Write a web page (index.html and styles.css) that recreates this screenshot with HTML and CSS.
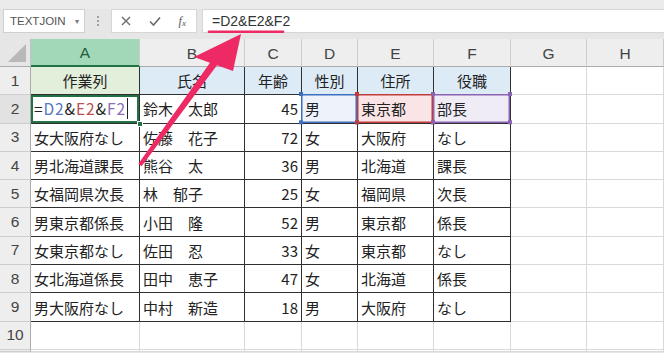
FILE: index.html
```html
<!DOCTYPE html>
<html lang="ja">
<head>
<meta charset="utf-8">
<title>TEXTJOIN</title>
<link rel="stylesheet" href="styles.css">
</head>
<body>
<div class="app">
  <div class="topstrip"></div>
  <div class="fbar">
    <div class="namebox"><span>TEXTJOIN</span><span class="dd">&#9662;</span></div>
    <div class="grip"><i></i><i></i><i></i></div>
    <div class="btns">
      <svg class="ico" width="12" height="12" viewBox="0 0 12 12"><path d="M2 2 L10 10 M10 2 L2 10" stroke="#6b6b6b" stroke-width="1.4" fill="none"/></svg>
      <svg class="ico" width="14" height="12" viewBox="0 0 14 12"><path d="M2 6.5 L5.5 10 L12 2.5" stroke="#6b6b6b" stroke-width="1.6" fill="none"/></svg>
      <span class="fx">f<sub>x</sub></span>
    </div>
    <div class="formula">=D2&amp;E2&amp;F2</div>
  </div>
  <div class="gap"></div>
  <div class="sheet">
    <div class="corner"><span class="tri"></span></div>
    <div class="ch act">A</div><div class="ch">B</div><div class="ch">C</div><div class="ch">D</div><div class="ch">E</div><div class="ch">F</div><div class="ch">G</div><div class="ch">H</div>

    <div class="rh">1</div>
    <div class="t hg">作業列</div><div class="t hb">氏名</div><div class="t hb">年齢</div><div class="t hb">性別</div><div class="t hb">住所</div><div class="t hb">役職</div><div class="c"></div><div class="c"></div>

    <div class="rh act">2</div>
    <div class="t actcell"><span class="ftxt">=<span class="cd">D2</span>&amp;<span class="ce">E2</span>&amp;<span class="cf">F2</span></span><span class="caret"></span><span class="handle"></span></div><div class="t">鈴木　太郎</div><div class="t num">45</div><div class="t ref rd">男</div><div class="t ref re">東京都</div><div class="t ref rf">部長</div><div class="c"></div><div class="c"></div>

    <div class="rh">3</div>
    <div class="t">女大阪府なし</div><div class="t">佐藤　花子</div><div class="t num">72</div><div class="t">女</div><div class="t">大阪府</div><div class="t">なし</div><div class="c"></div><div class="c"></div>

    <div class="rh">4</div>
    <div class="t">男北海道課長</div><div class="t">熊谷　太</div><div class="t num">36</div><div class="t">男</div><div class="t">北海道</div><div class="t">課長</div><div class="c"></div><div class="c"></div>

    <div class="rh">5</div>
    <div class="t">女福岡県次長</div><div class="t">林　郁子</div><div class="t num">25</div><div class="t">女</div><div class="t">福岡県</div><div class="t">次長</div><div class="c"></div><div class="c"></div>

    <div class="rh">6</div>
    <div class="t">男東京都係長</div><div class="t">小田　隆</div><div class="t num">52</div><div class="t">男</div><div class="t">東京都</div><div class="t">係長</div><div class="c"></div><div class="c"></div>

    <div class="rh">7</div>
    <div class="t">女東京都なし</div><div class="t">佐田　忍</div><div class="t num">33</div><div class="t">女</div><div class="t">東京都</div><div class="t">なし</div><div class="c"></div><div class="c"></div>

    <div class="rh">8</div>
    <div class="t">女北海道係長</div><div class="t">田中　恵子</div><div class="t num">47</div><div class="t">女</div><div class="t">北海道</div><div class="t">係長</div><div class="c"></div><div class="c"></div>

    <div class="rh">9</div>
    <div class="t">男大阪府なし</div><div class="t">中村　新造</div><div class="t num">18</div><div class="t">男</div><div class="t">大阪府</div><div class="t">なし</div><div class="c"></div><div class="c"></div>

    <div class="rh">10</div>
    <div class="c"></div><div class="c"></div><div class="c"></div><div class="c"></div><div class="c"></div><div class="c"></div><div class="c"></div><div class="c"></div>

    <div class="rh"></div>
    <div class="c"></div><div class="c"></div><div class="c"></div><div class="c"></div><div class="c"></div><div class="c"></div><div class="c"></div><div class="c"></div>
  </div>
  <svg class="arrow" width="664" height="353" viewBox="0 0 664 353">
    <line x1="209" y1="31.8" x2="283" y2="31.8" stroke="#ee2a64" stroke-width="2.6" stroke-linecap="round"/>
    <polygon points="241,34 233,71 217,65.2 141.6,166.2 138.4,163.8 210,62.7 194,57" fill="#ee2a64"/>
  </svg>
</div>
</body>
</html>
```

FILE: styles.css
```css
* { box-sizing: border-box; }
html, body { margin: 0; padding: 0; }
body {
  width: 664px;
  height: 353px;
  overflow: hidden;
  background: #e6e6e6;
  font-family: "Noto Sans CJK JP", "Noto Sans", sans-serif;
}
.app { position: relative; width: 664px; height: 353px; }
.topstrip { height: 10px; background: #ebebeb; border-bottom: 1px solid #dcdcdc; }
.fbar {
  display: flex;
  align-items: stretch;
  height: 24px;
  margin-top: -1px;
  background: #e6e6e6;
}
.namebox {
  width: 82px;
  margin-left: 3px;
  background: #fff;
  border: 1px solid #cfcfcf;
  display: flex;
  align-items: center;
  justify-content: space-between;
  padding: 0 5px 0 6px;
  font-family: "Liberation Sans", "Open Sans", sans-serif;
  font-size: 11.5px;
  color: #555;
}
.dd { font-size: 8px; color: #777; }
.grip {
  width: 26px;
  display: flex;
  flex-direction: column;
  align-items: center;
  justify-content: center;
  gap: 2px;
}
.grip i { display: block; width: 2px; height: 2px; background: #a0a0a0; }
.btns {
  width: 86px;
  background: #fff;
  border: 1px solid #d6d6d6;
  display: flex;
  align-items: center;
  justify-content: space-around;
  padding: 0 2px 0 0;
}
.fx {
  font-family: "Liberation Serif", serif;
  font-style: italic;
  font-size: 12px;
  color: #555;
}
.fx sub { font-size: 9px; vertical-align: -1px; }
.formula {
  flex: 1;
  margin-left: 5px;
  background: #fff;
  border: 1px solid #d6d6d6;
  border-right: none;
  padding-left: 9px;
  display: flex;
  align-items: center;
  font-family: "Liberation Sans", "Open Sans", sans-serif;
  font-size: 14px;
  color: #333;
}
.gap { height: 6px; background: #e6e6e6; }
.sheet {
  display: grid;
  grid-template-columns: 31px 109px 105px 57px 56px 76px 77px 76px 77px;
  grid-template-rows: 28px repeat(10, 28.3px) 1fr;
  height: 313px;
  background: #fff;
  font-size: 15px;
  color: #222;
}
.corner {
  position: relative;
  background: #e6e6e6;
  border-right: 1px solid #c2c2c2;
  border-bottom: 1px solid #ababab;
}
.tri {
  position: absolute;
  right: 4px;
  bottom: 4px;
  width: 0;
  height: 0;
  border-left: 18px solid transparent;
  border-bottom: 18px solid #b8b8b8;
}
.ch {
  background: #eeeeee;
  border-right: 1px solid #cdcdcd;
  border-bottom: 1px solid #ababab;
  display: flex;
  align-items: center;
  justify-content: center;
  font-family: "Liberation Sans", "Open Sans", sans-serif;
  font-size: 15.5px;
  color: #444;
  padding-top: 2px;
}
.ch.act {
  background: #a2d8b8;
  border-bottom: 2px solid #217346;
  color: #1f5f3a;
}
.rh {
  background: #eeeeee;
  border-right: 1px solid #ababab;
  border-bottom: 1px solid #cdcdcd;
  display: flex;
  align-items: center;
  justify-content: center;
  font-family: "Liberation Sans", "Open Sans", sans-serif;
  font-size: 15.5px;
  color: #444;
}
.rh.act { background: #e2e2e2; }
.c {
  border-right: 1px solid #d9d9d9;
  border-bottom: 1px solid #d9d9d9;
}
.t {
  position: relative;
  border-right: 1px solid #303030;
  border-bottom: 1px solid #303030;
  display: flex;
  align-items: center;
  padding: 0 3px;
  white-space: nowrap;
  line-height: 1;
}
.hg { background: #e2efda; justify-content: center; }
.hb { background: #ddebf7; justify-content: center; }
.num { justify-content: flex-end; }
.actcell {
  box-shadow: inset 0 0 0 2px #217346;
}
.ftxt { font-size: 15.5px; letter-spacing: 0.9px; }
.cd { color: #5479c2; }
.ce { color: #c0504d; }
.cf { color: #8d6bb5; }
.caret {
  display: inline-block;
  width: 1px;
  height: 21px;
  background: #222;
  margin-left: 1px;
}
.handle {
  position: absolute;
  right: -4px;
  bottom: -4px;
  width: 6px;
  height: 6px;
  background: #217346;
  border: 1px solid #fff;
  z-index: 2;
}
.ref::before {
  content: "";
  position: absolute;
  left: -2px;
  top: -2px;
  width: 4px;
  height: 4px;
  background: var(--rc);
  box-shadow: var(--w) 0 0 var(--rc), 0 28.3px 0 var(--rc), var(--w) 28.3px 0 var(--rc);
  z-index: 2;
}
.ref { box-shadow: inset 0 0 0 1.5px var(--rc); margin: -1px 0 0 -1px; padding-left: 4px; }
.rd { --rc: #3c6fc0; --w: 56px; background: #eef3fb; }
.re { --rc: #c23b3b; --w: 76px; background: #fbe4e6; }
.rf { --rc: #8a63b3; --w: 77px; background: #f0ecf6; }
.arrow {
  position: absolute;
  left: 0;
  top: 0;
  pointer-events: none;
}
```
